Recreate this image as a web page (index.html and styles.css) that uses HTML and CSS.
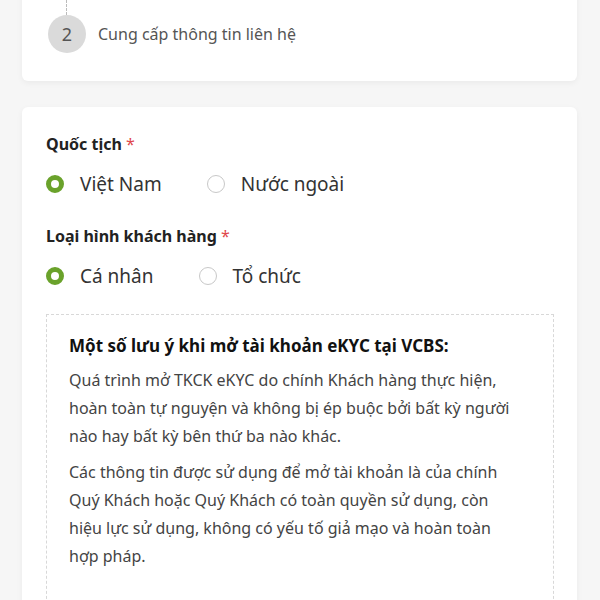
FILE: index.html
```html
<!DOCTYPE html>
<html lang="vi">
<head>
    <meta charset="UTF-8">
    <meta name="viewport" content="width=device-width, initial-scale=1.0">
    <title>Mở tài khoản eKYC</title>
    <link rel="stylesheet" href="styles.css">
</head>
<body>
    <div class="page">
        <div class="card steps-card">
            <div class="step-line"></div>
            <div class="step">
                <span class="step-num">2</span>
                <span class="step-text">Cung cấp thông tin liên hệ</span>
            </div>
        </div>

        <div class="card form-card">
            <div class="field-label">Quốc tịch <span class="req">*</span></div>
            <div class="radio-group">
                <label class="radio checked"><span class="dot"></span>Việt Nam</label>
                <label class="radio"><span class="dot"></span>Nước ngoài</label>
            </div>

            <div class="field-label second">Loại hình khách hàng <span class="req">*</span></div>
            <div class="radio-group">
                <label class="radio checked"><span class="dot"></span>Cá nhân</label>
                <label class="radio"><span class="dot"></span>Tổ chức</label>
            </div>

            <div class="notice">
                <h3>Một số lưu ý khi mở tài khoản eKYC tại VCBS:</h3>
                <p>Quá trình mở TKCK eKYC do chính Khách hàng thực hiện, hoàn toàn tự nguyện và không bị ép buộc bởi bất kỳ người nào hay bất kỳ bên thứ ba nào khác.</p>
                <p>Các thông tin được sử dụng để mở tài khoản là của chính Quý Khách hoặc Quý Khách có toàn quyền sử dụng, còn hiệu lực sử dụng, không có yếu tố giả mạo và hoàn toàn hợp pháp.</p>
            </div>
        </div>
    </div>
</body>
</html>
```

FILE: styles.css
```css
body {
    margin: 0;
    padding: 0;
    background-color: #f6f6f6;
    font-family: "Noto Sans", "DejaVu Sans", sans-serif;
    color: #333;
    overflow: hidden;
}
.page {
    padding: 0 23px 0 22px;
}
.card {
    background: #fff;
    border-radius: 6px;
    box-shadow: 0 2px 6px rgba(0, 0, 0, 0.05);
}
.steps-card {
    margin-top: -20px;
    padding: 20px 26px 28px;
}
.step-line {
    width: 0;
    height: 15px;
    margin-left: 18px;
    border-left: 1px dashed #bbb;
}
.step {
    display: flex;
    align-items: center;
    gap: 12px;
}
.step-num {
    width: 38px;
    height: 38px;
    border-radius: 50%;
    background: #dadada;
    color: #555;
    font-size: 18px;
    display: flex;
    align-items: center;
    justify-content: center;
}
.step-text {
    font-size: 16px;
    color: #555;
}
.form-card {
    margin-top: 26px;
    padding: 26px 23px 40px 24px;
}
.field-label {
    font-size: 16px;
    line-height: 22px;
    font-weight: bold;
    color: #222;
}
.field-label.second {
    margin-top: 26px;
}
.req {
    color: #e0474c;
    font-weight: normal;
}
.radio-group {
    display: flex;
    gap: 45px;
    margin-top: 14px;
    height: 30px;
    align-items: center;
}
.radio {
    display: flex;
    align-items: center;
    gap: 16px;
    font-size: 19px;
    color: #333;
}
.dot {
    width: 18px;
    height: 18px;
    box-sizing: border-box;
    border-radius: 50%;
    border: 1px solid #c8c8c8;
    background: #fff;
}
.radio.checked .dot {
    border: 5px solid #6aa22b;
}
.notice {
    margin-top: 23px;
    border: 1px dashed #d8d8d8;
    padding: 20px 29px 30px 22px;
}
.notice h3 {
    margin: 0 0 9px;
    font-size: 17px;
    line-height: 22px;
    color: #111;
}
.notice p {
    margin: 0 0 8px;
    font-size: 16px;
    line-height: 28px;
    color: #444;
}
```
